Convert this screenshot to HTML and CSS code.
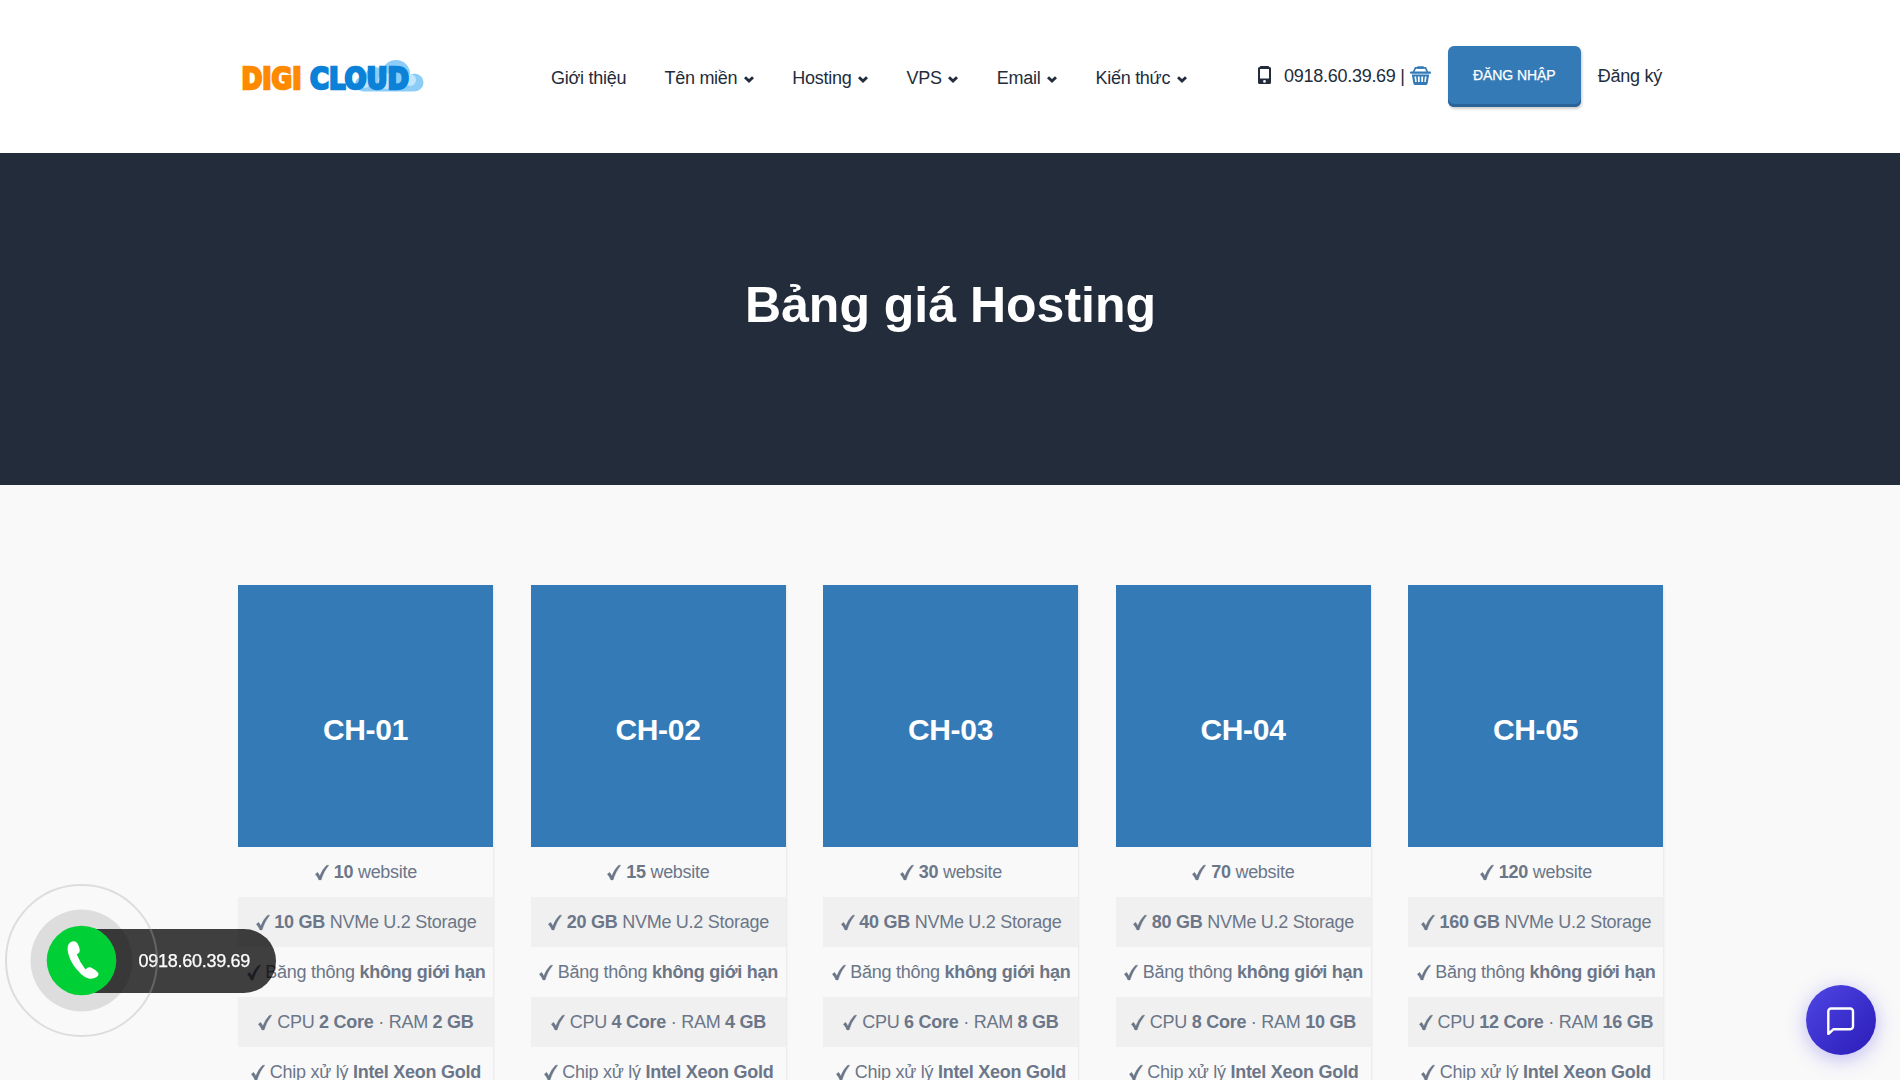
FILE: index.html
```html
<!DOCTYPE html>
<html lang="vi">
<head>
<meta charset="utf-8">
<title>Bảng giá Hosting</title>
<link rel="stylesheet" href="styles.css">
</head>
<body>
<svg width="0" height="0" class="defs">
  <symbol id="chev" viewBox="0 0 10 7"><path d="M1 1.200 5 5 9 1.200" fill="none" stroke="currentColor" stroke-width="2.900"/></symbol>
  <symbol id="check" viewBox="0 0 14 17"><path d="M0.300 10.200 2.500 8.300Q4 9.900 4.800 12 7.300 5.200 11.700 1.200L13.800 1.200Q8.500 7.600 6.100 16H3.900Q2.500 12.400 0.300 10.200Z" fill="currentColor" stroke="currentColor" stroke-width=".3"/></symbol>
</svg>
<header class="header">
  <div class="container header-row">
    <a class="logo" aria-label="Digi Cloud">
      <svg width="186" height="36" viewBox="0 0 186 36">
        <g fill="#8ccdf8"><circle cx="137" cy="18" r="10"/><circle cx="158" cy="15" r="14"/><circle cx="176.500" cy="23.500" r="9"/><circle cx="124" cy="25" r="7"/><rect x="122" y="20" width="55" height="12.500" rx="4"/></g>
        <g fill="#c3e6fd"><circle cx="148" cy="22" r="8"/><circle cx="172" cy="21" r="6"/><circle cx="127" cy="24" r="5"/></g>
        <text class="logo-text" x="3.500" y="30" fill="#ff8a00" stroke="#ff8a00" textLength="60" lengthAdjust="spacingAndGlyphs">DIGI</text>
        <text class="logo-text" x="72" y="30" fill="#0b82d8" stroke="#0b82d8" textLength="99" lengthAdjust="spacingAndGlyphs">CLOUD</text>
      </svg>
    </a>
    <nav class="nav">
      <a>Giới thiệu</a>
      <a>Tên miền <svg><use href="#chev"/></svg></a>
      <a>Hosting <svg><use href="#chev"/></svg></a>
      <a>VPS <svg><use href="#chev"/></svg></a>
      <a>Email <svg><use href="#chev"/></svg></a>
      <a>Kiến thức <svg><use href="#chev"/></svg></a>
    </nav>
    <div class="actions">
      <svg class="mobile" viewBox="0 0 13 18"><path fill="currentColor" fill-rule="evenodd" d="M2.500 0h8L12 1.500h1V16.500Q13 18 11.500 18h-10Q0 18 0 16.500V1.500h1zM2 3v9.500h9V3zM6.500 14a1.400 1.400 0 1 0 0 2.800 1.400 1.400 0 0 0 0-2.800z"/></svg>
      <span class="tel">0918.60.39.69 |</span>
      <svg class="basket" viewBox="0 0 21 19"><path fill="none" stroke="currentColor" stroke-width="1.700" d="M3.500 6 5.500 1.800H15.500L17.500 6"/><rect x="7" y="0.300" width="7" height="2.400" rx=".8" fill="currentColor"/><rect y="5.500" width="21" height="2.200" rx="1" fill="currentColor"/><path fill="currentColor" fill-rule="evenodd" d="M1.800 8.500h17.400L17.600 17.500Q17.300 19 15.800 19H5.200Q3.700 19 3.400 17.500ZM4.400 10.500l.8 5.500h1.500l-.6-5.500zM7.800 10.500l.3 5.500h1.600v-5.500zM11.300 10.500V16h1.600l.3-5.500zM14.900 10.500 14.300 16h1.500l.8-5.500z"/></svg>
      <a class="btn">ĐĂNG NHẬP</a>
      <a class="signup">Đăng ký</a>
    </div>
  </div>
</header>
<section class="hero"><h1>Bảng giá Hosting</h1></section>
<main class="container plans">
  <article class="card"><h2>CH-01</h2><ul>
    <li><svg><use href="#check"/></svg> <b>10</b> website</li>
    <li><svg><use href="#check"/></svg> <b>10 GB</b> NVMe U.2 Storage</li>
    <li><svg><use href="#check"/></svg> Băng thông <b>không giới hạn</b></li>
    <li><svg><use href="#check"/></svg> CPU <b>2 Core</b> · RAM <b>2 GB</b></li>
    <li><svg><use href="#check"/></svg> Chip xử lý <b>Intel Xeon Gold</b></li></ul></article>
  <article class="card"><h2>CH-02</h2><ul>
    <li><svg><use href="#check"/></svg> <b>15</b> website</li>
    <li><svg><use href="#check"/></svg> <b>20 GB</b> NVMe U.2 Storage</li>
    <li><svg><use href="#check"/></svg> Băng thông <b>không giới hạn</b></li>
    <li><svg><use href="#check"/></svg> CPU <b>4 Core</b> · RAM <b>4 GB</b></li>
    <li><svg><use href="#check"/></svg> Chip xử lý <b>Intel Xeon Gold</b></li></ul></article>
  <article class="card"><h2>CH-03</h2><ul>
    <li><svg><use href="#check"/></svg> <b>30</b> website</li>
    <li><svg><use href="#check"/></svg> <b>40 GB</b> NVMe U.2 Storage</li>
    <li><svg><use href="#check"/></svg> Băng thông <b>không giới hạn</b></li>
    <li><svg><use href="#check"/></svg> CPU <b>6 Core</b> · RAM <b>8 GB</b></li>
    <li><svg><use href="#check"/></svg> Chip xử lý <b>Intel Xeon Gold</b></li></ul></article>
  <article class="card"><h2>CH-04</h2><ul>
    <li><svg><use href="#check"/></svg> <b>70</b> website</li>
    <li><svg><use href="#check"/></svg> <b>80 GB</b> NVMe U.2 Storage</li>
    <li><svg><use href="#check"/></svg> Băng thông <b>không giới hạn</b></li>
    <li><svg><use href="#check"/></svg> CPU <b>8 Core</b> · RAM <b>10 GB</b></li>
    <li><svg><use href="#check"/></svg> Chip xử lý <b>Intel Xeon Gold</b></li></ul></article>
  <article class="card"><h2>CH-05</h2><ul>
    <li><svg><use href="#check"/></svg> <b>120</b> website</li>
    <li><svg><use href="#check"/></svg> <b>160 GB</b> NVMe U.2 Storage</li>
    <li><svg><use href="#check"/></svg> Băng thông <b>không giới hạn</b></li>
    <li><svg><use href="#check"/></svg> CPU <b>12 Core</b> · RAM <b>16 GB</b></li>
    <li><svg><use href="#check"/></svg> Chip xử lý <b>Intel Xeon Gold</b></li></ul></article>
</main>
<div class="call">
  <div class="call-bar">0918.60.39.69</div>
  <svg class="call-rings" width="154" height="154" viewBox="0 0 154 154">
    <circle cx="77.500" cy="77.500" r="75.500" fill="none" stroke="#aaa" stroke-opacity=".35" stroke-width="2"/>
    <circle cx="77.500" cy="77.500" r="51" fill="#000" fill-opacity=".11"/>
    <circle cx="77.500" cy="77.500" r="34.800" fill="#00d035"/>
    <path fill="#fff" d="M66 59.500Q71 56.500 73.500 60.500Q76.500 66 75.500 69Q75 70.500 72.700 71.200Q75.500 78.500 81.500 86.500Q84 83.500 87 84.500Q91.500 86.500 94.300 90Q95.500 93 90.500 95Q84 97.500 77 91Q67.500 82 64.500 71.500Q62 62.500 66 59.500Z"/>
  </svg>
</div>
<div class="chat"><svg width="30" height="30" viewBox="0 0 30 30" fill="none" stroke="#fff" stroke-width="2.400" stroke-linejoin="round"><path d="M27 21.500a2.700 2.700 0 0 1-2.700 2.700H7.600L2.300 29V6.200a2.700 2.700 0 0 1 2.700-2.700h19.300a2.700 2.700 0 0 1 2.700 2.700z"/></svg></div>
</body>
</html>
```
FILE: styles.css
```css
* { box-sizing: border-box; }
body {
  margin: 0;
  height: 1080px;
  overflow: hidden;
  background: #f9f9f9;
  font: 18px/30px "Liberation Sans", Arial, sans-serif;
  letter-spacing: -0.27px;
  color: #6b7688;
}
.defs { position: absolute; }
.container { width: 1424px; margin: 0 auto; }
.header { background: #fff; height: 153px; color: #232c3b; }
.header-row { display: flex; align-items: center; height: 153px; }
.logo { display: flex; width: 313px; }
.logo-text { font: bold 30px "DejaVu Sans Condensed", "DejaVu Sans", sans-serif; letter-spacing: 0; stroke-width: 2.4px; }
.nav { display: flex; gap: 38.3px; width: 706px; padding-top: 2px; white-space: nowrap; }
.nav svg { width: 10px; height: 7px; margin-left: 2px; vertical-align: 1px; }
.actions { display: flex; align-items: center; white-space: nowrap; }
.mobile { width: 13px; height: 18px; margin: -3px 13px 0 1px; }
.tel { margin-top: -1px; }
.basket { width: 21px; height: 19px; color: #337ab7; margin: -2px 17px 0 5px; }
.btn {
  width: 133px;
  height: 61px;
  border-radius: 6px;
  background: #337ab7;
  box-shadow: inset 0 -3px 0 #2a6496, 1px 2px 3px rgba(0, 0, 0, .2);
  color: #fff;
  font-size: 14px;
  line-height: 58px;
  letter-spacing: -.1px;
  text-align: center;
  -webkit-text-stroke: .25px #fff;
}
.signup { margin: -1px 0 0 17px; }
.hero {
  display: flex;
  justify-content: center;
  height: 332px;
  padding: 122px 0 0 1px;
  background: #232c3b;
}
h1 { margin: 0; color: #fff; font-size: 50px; line-height: 60px; letter-spacing: 0; }
.plans { display: flex; gap: 37.5px; padding-top: 100px; }
.card { flex: 0 0 255px; box-shadow: 1px 1px 2px rgba(0, 0, 0, .07); }
h2 {
  margin: 0;
  height: 262px;
  padding-top: 125px;
  background: #337ab7;
  color: #fff;
  font-size: 30px;
  line-height: 40px;
  letter-spacing: -.3px;
  text-align: center;
}
ul { margin: 0; padding: 0; list-style: none; }
li { height: 50px; padding-left: 1px; line-height: 50px; text-align: center; white-space: nowrap; }
li:nth-child(even) { background: #f0f0f0; }
li svg { width: 14px; height: 17px; vertical-align: -3px; }
.call { position: fixed; left: 4px; top: 883px; width: 274px; height: 154px; }
.call-bar {
  position: absolute;
  left: 77px;
  top: 46px;
  width: 195px;
  height: 64px;
  padding-left: 57.5px;
  border-radius: 0 32px 32px 0;
  background: rgba(0, 0, 0, .75);
  color: #fff;
  line-height: 65px;
  -webkit-text-stroke: .25px #fff;
}
.call-rings { position: absolute; left: 0; top: 0; }
.chat {
  position: fixed;
  left: 1806px;
  top: 985px;
  width: 70px;
  height: 70px;
  display: flex;
  align-items: center;
  justify-content: center;
  border-radius: 50%;
  background: linear-gradient(135deg, #4f46e5, #2a1cb8);
  box-shadow: 0 4px 20px rgba(79, 70, 229, .35);
}
```
